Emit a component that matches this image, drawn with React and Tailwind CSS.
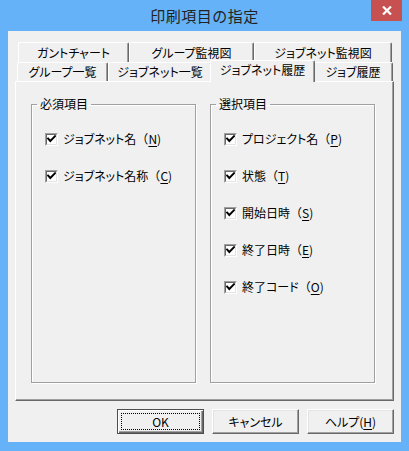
import React from "react";

function Tab({ label, w, row }) {
  return (
    <div
      className={
        row === 1
          ? "h-[20px] flex items-center justify-center border-l border-t border-r border-l-white border-t-white border-r-[#696969] rounded-t-[2px] shadow-[inset_-1px_0_0_#a0a0a0] text-[12px] leading-none text-black"
          : "h-[19px] flex items-center justify-center border-l border-t border-r border-l-white border-t-white border-r-[#696969] rounded-t-[2px] shadow-[inset_-1px_0_0_#a0a0a0] text-[12px] leading-none text-black"
      }
      style={{ width: w }}
    >
      <span className="[font-feature-settings:'palt']">{label}</span>
    </div>
  );
}

function SelTab({ label, w }) {
  return (
    <div
      className="relative z-10 self-start h-[22px] -mt-[2px] -mx-[2px] flex items-center justify-center pb-[3px] bg-[#f0f0f0] border-l border-t border-r border-l-white border-t-white border-r-[#696969] rounded-t-[2px] shadow-[inset_-1px_0_0_#a0a0a0] text-[12px] leading-none text-black"
      style={{ width: w }}
    >
      <span className="[font-feature-settings:'palt']">{label}</span>
    </div>
  );
}

function Check() {
  return (
    <span className="w-[13px] h-[13px] shrink-0 border border-t-[#a0a0a0] border-l-[#a0a0a0] border-r-white border-b-white flex">
      <span className="flex-1 bg-white border border-t-[#696969] border-l-[#696969] border-r-[#e3e3e3] border-b-[#e3e3e3] flex items-center justify-center">
        <svg width="9" height="9" viewBox="0 0 9 9">
          <path d="M1 3.5 L3.3 6 L8 1.2" fill="none" stroke="#000" strokeWidth="1.9" strokeLinecap="square" />
        </svg>
      </span>
    </span>
  );
}

function Item({ label, k }) {
  return (
    <div className="h-[16px] flex items-center gap-[5px]">
      <Check />
      <span className="text-[12px] leading-none text-black whitespace-nowrap">
        <span className="[font-feature-settings:'palt']">{label}</span>
        <span>（</span>
        <span className="underline underline-offset-[2px]">{k}</span>
        <span>)</span>
      </span>
    </div>
  );
}

function Group({ title, items }) {
  return (
    <fieldset className="w-[165px] h-[286px] border border-[#a0a0a0] shadow-[1px_1px_0_#fff,inset_1px_1px_0_#fff]">
      <legend className="ml-[5px] px-[3px] text-[12px] leading-[14px] text-black">{title}</legend>
      <div className="flex flex-col gap-[21px] pt-[20px] pl-[13px]">
        {items.map(([l, k]) => (
          <Item key={l} label={l} k={k} />
        ))}
      </div>
    </fieldset>
  );
}

function Btn({ children, def }) {
  return (
    <div
      className={
        def
          ? "w-[87px] h-[25px] flex items-center justify-center text-[12px] leading-none text-black border border-[#4d4d4d] shadow-[inset_1px_1px_0_#fff,inset_-1px_-1px_0_#696969,inset_-2px_-2px_0_#a0a0a0] outline-1 outline-dotted outline-black [outline-offset:-5px]"
          : "w-[87px] h-[25px] flex items-center justify-center text-[12px] leading-none text-black border border-t-white border-l-white border-r-[#696969] border-b-[#696969] shadow-[inset_-1px_-1px_0_#a0a0a0,inset_1px_1px_0_#e3e3e3]"
      }
    >
      {children}
    </div>
  );
}

export default function App() {
  return (
    <div className="w-[409px] h-[451px] bg-[#65b2f8] flex flex-col font-['Noto_Sans_CJK_JP','Noto_Sans',sans-serif]">
      <div className="relative h-[31px] flex items-center justify-center">
        <span className="text-[15px] leading-none text-[#222] tracking-[0.5px]">印刷項目の指定</span>
        <div className="absolute right-[7px] top-0 w-[31px] h-[21px] bg-[#c75050] flex items-center justify-center">
          <svg width="10" height="9" viewBox="0 0 10 9">
            <path d="M1 0.5 L9 8.5 M9 0.5 L1 8.5" stroke="#fff" strokeWidth="2.2" />
          </svg>
        </div>
      </div>
      <div className="mx-[8px] h-[411px] bg-[#f0f0f0] flex flex-col pt-[11px]">
        <div className="flex ml-[10px]">
          <Tab label="ガントチャート" w={111} row={1} />
          <Tab label="グループ監視図" w={125} row={1} />
          <Tab label="ジョブネット監視図" w={138} row={1} />
        </div>
        <div className="flex h-[19px] ml-[9px]">
          <Tab label="グループ一覧" w={91} row={2} />
          <Tab label="ジョブネット一覧" w={104} row={2} />
          <SelTab label="ジョブネット履歴" w={105} />
          <Tab label="ジョブ履歴" w={80} row={2} />
        </div>
        <div className="mx-[7px] h-[320px] border border-l-white border-t-white border-r-[#696969] border-b-[#696969] shadow-[inset_-1px_-1px_0_#a0a0a0] flex gap-[14px] pl-[15px] pt-[15px]">
          <Group title="必須項目" items={[["ジョブネット名", "N"], ["ジョブネット名称", "C"]]} />
          <Group
            title="選択項目"
            items={[
              ["プロジェクト名", "P"],
              ["状態", "T"],
              ["開始日時", "S"],
              ["終了日時", "E"],
              ["終了コード", "O"],
            ]}
          />
        </div>
        <div className="flex justify-end gap-[8px] mt-[8px] pr-[7px]">
          <Btn def>OK</Btn>
          <Btn>
            <span className="[font-feature-settings:'palt']">キャンセル</span>
          </Btn>
          <Btn>
            <span className="[font-feature-settings:'palt']">ヘルプ</span>(<span className="underline underline-offset-[2px]">H</span>)
          </Btn>
        </div>
      </div>
    </div>
  );
}
